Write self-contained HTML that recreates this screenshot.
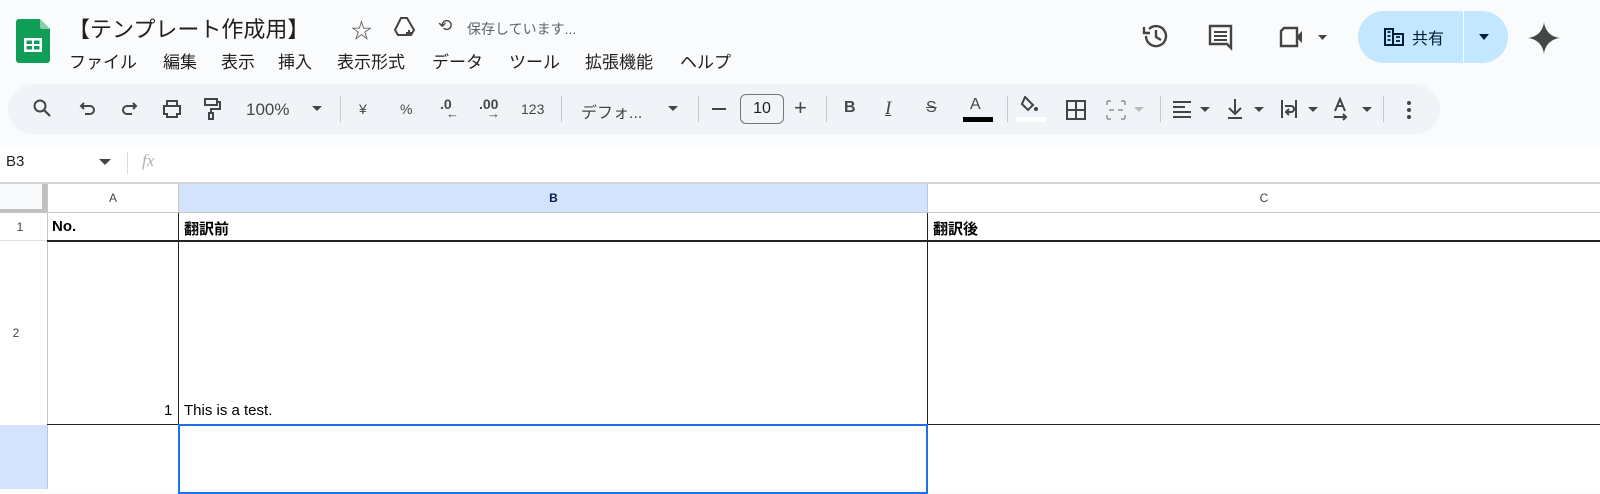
<!DOCTYPE html>
<html><head><meta charset="utf-8"><style>
*{margin:0;padding:0;box-sizing:border-box}
body{width:1600px;height:489px;overflow:hidden;background:#f9fbfd;font-family:"Liberation Sans","Noto Sans CJK JP",sans-serif;color:#1f1f1f;position:relative}
.a{position:absolute;white-space:nowrap}
.m{position:absolute;top:48px;font-size:17px;color:#1f1f1f;white-space:nowrap}
.tb{position:absolute;left:8px;top:84px;width:1432px;height:50px;background:#f0f4f9;border-radius:25px}
.ti{position:absolute;top:97px;font-size:16px;color:#444746}
.sep{position:absolute;top:96px;width:1px;height:26px;background:#c7c7c7}
.grid{position:absolute;left:0;top:182px;width:1600px;height:307px;background:#fff}
.hl{position:absolute;height:1px;background:#e1e1e1}
.vl{position:absolute;width:1px;background:#e1e1e1}
.hdr{position:absolute;font-size:12px;color:#444;text-align:center}
</style></head><body>
<svg class="a" style="left:16px;top:19px" width="34" height="44" viewBox="0 0 34 44"><path d="M3 0h21l10 10v31a3 3 0 0 1-3 3H3a3 3 0 0 1-3-3V3a3 3 0 0 1 3-3z" fill="#0f9d58"/><path d="M24 0l10 10h-8a2 2 0 0 1-2-2z" fill="#87ceac"/><rect x="8" y="19" width="18" height="14" fill="#fff"/><rect x="10.5" y="21.5" width="5.5" height="3.5" fill="#0f9d58"/><rect x="18" y="21.5" width="5.5" height="3.5" fill="#0f9d58"/><rect x="10.5" y="27" width="5.5" height="3.5" fill="#0f9d58"/><rect x="18" y="27" width="5.5" height="3.5" fill="#0f9d58"/></svg>
<div class="a" style="left:68px;top:12px;font-size:22px">【テンプレート作成用】</div>
<div class="a" style="left:351px;top:15px;font-size:21px;color:#444">☆</div>
<svg class="a" style="left:393px;top:16px" width="24" height="22" viewBox="0 0 24 22"><path d="M8 2h6l7 12-3 5H5l-3-5z" fill="none" stroke="#444" stroke-width="2"/><path d="M16 14v6M13 17h6" stroke="#444" stroke-width="2"/></svg>
<div class="a" style="left:438px;top:16px;font-size:17px;color:#444">⟲</div>
<div class="a" style="left:467px;top:19px;font-size:14px;color:#5f6368">保存しています...</div>
<div class="m" style="left:69px">ファイル</div>
<div class="m" style="left:163px">編集</div>
<div class="m" style="left:221px">表示</div>
<div class="m" style="left:278px">挿入</div>
<div class="m" style="left:337px">表示形式</div>
<div class="m" style="left:432px">データ</div>
<div class="m" style="left:509px">ツール</div>
<div class="m" style="left:585px">拡張機能</div>
<div class="m" style="left:680px">ヘルプ</div>
<svg class="a" style="left:1141px;top:22px" width="30" height="28" viewBox="0 0 30 28"><path d="M5 14a10 10 0 1 0 3-7" fill="none" stroke="#444" stroke-width="2.4"/><path d="M3 5v6h6" fill="none" stroke="#444" stroke-width="2.4"/><path d="M15 8v7l5 3" fill="none" stroke="#444" stroke-width="2.4"/></svg>
<svg class="a" style="left:1207px;top:23px" width="28" height="28" viewBox="0 0 28 28"><path d="M3 3h21v22l-4-4H3z" fill="none" stroke="#444" stroke-width="2.4"/><path d="M7 9h13M7 13h13M7 17h13" stroke="#444" stroke-width="2"/></svg>
<svg class="a" style="left:1278px;top:25px" width="52" height="24" viewBox="0 0 52 24"><path d="M6 3h13v18H3V6z" fill="none" stroke="#444" stroke-width="2.4"/><path d="M19 11l5-5v12l-5-5z" fill="#444"/><path d="M40 10h9l-4.5 5z" fill="#444"/></svg>
<div class="a" style="left:1358px;top:11px;width:150px;height:52px;background:#c2e7ff;border-radius:26px"></div>
<div class="a" style="left:1463px;top:11px;width:1px;height:52px;background:#fff"></div>
<svg class="a" style="left:1383px;top:27px" width="22" height="20" viewBox="0 0 22 20"><path d="M2 2h8v16H2zM10 7h10v11H10" fill="none" stroke="#001d35" stroke-width="2"/><path d="M4.5 5h3M4.5 9h3M4.5 13h3M13 10h4M13 14h4" stroke="#001d35" stroke-width="1.8"/></svg>
<div class="a" style="left:1412px;top:25px;font-size:16px;color:#001d35">共有</div>
<svg class="a" style="left:1478px;top:33px" width="12" height="8"><path d="M1 1h10L6 7z" fill="#001d35"/></svg>
<svg class="a" style="left:1528px;top:22px" width="32" height="32" viewBox="0 0 32 32"><path d="M16 0C17 9 23 15 32 16 23 17 17 23 16 32 15 23 9 17 0 16 9 15 15 9 16 0z" fill="#444746"/></svg>

<div class="tb"></div>
<svg class="a" style="left:32px;top:98px" width="20" height="20" viewBox="0 0 20 20"><circle cx="8" cy="8" r="5.5" fill="none" stroke="#444" stroke-width="2"/><path d="M12 12l6 6" stroke="#444" stroke-width="2.2"/></svg>
<svg class="a" style="left:79px;top:101px" width="18" height="18" viewBox="0 0 18 18"><path d="M5 2L2 5l3 3M2 5h9a4 4 0 0 1 0 8H6" fill="none" stroke="#444" stroke-width="2"/></svg>
<svg class="a" style="left:120px;top:101px" width="18" height="18" viewBox="0 0 18 18"><path d="M13 2l3 3-3 3M16 5H7a4 4 0 0 0 0 8h5" fill="none" stroke="#444" stroke-width="2"/></svg>
<svg class="a" style="left:162px;top:99px" width="20" height="20" viewBox="0 0 20 20"><path d="M5 2h10v5H5zM2 7h16v8h-3v3H5v-3H2z" fill="none" stroke="#444" stroke-width="2"/></svg>
<svg class="a" style="left:202px;top:97px" width="20" height="24" viewBox="0 0 20 24"><path d="M3 2h12v6H3zM15 5h3v7H9v4M7 16h4v6H7z" fill="none" stroke="#444" stroke-width="2"/></svg>
<div class="ti" style="left:246px;top:100px;font-size:17px">100%</div>
<svg class="a" style="left:312px;top:106px" width="10" height="6"><path d="M0 0h10L5 5z" fill="#444"/></svg>
<div class="sep" style="left:340px"></div>
<div class="ti" style="left:359px;top:101px;font-size:14px">¥</div>
<div class="ti" style="left:400px;top:101px;font-size:14px">%</div>
<div class="ti" style="left:440px;top:96px;font-size:14px;font-weight:bold">.0</div><div class="ti" style="left:446px;top:106px;font-size:13px">←</div>
<div class="ti" style="left:479px;top:96px;font-size:14px;font-weight:bold">.00</div><div class="ti" style="left:487px;top:106px;font-size:13px">→</div>
<div class="ti" style="left:521px;top:101px;font-size:14px">123</div>
<div class="sep" style="left:561px"></div>
<div class="ti" style="left:581px;top:99px;font-size:16px">デフォ...</div>
<svg class="a" style="left:668px;top:106px" width="10" height="6"><path d="M0 0h10L5 5z" fill="#444"/></svg>
<div class="sep" style="left:698px"></div>
<div class="a" style="left:712px;top:108px;width:14px;height:2px;background:#444"></div>
<div class="a" style="left:740px;top:94px;width:44px;height:30px;border:1px solid #747775;border-radius:6px;text-align:center;font-size:16px;line-height:28px;color:#1f1f1f">10</div>
<div class="ti" style="left:794px;top:95px;font-size:22px">+</div>
<div class="sep" style="left:826px"></div>
<div class="ti" style="left:844px;top:99px;font-weight:bold;font-size:16px">B</div>
<div class="ti" style="left:885px;top:98px;font-style:italic;font-family:'Liberation Serif',serif;font-size:19px;text-decoration:underline;">I</div>
<div class="ti" style="left:926px;top:99px;font-size:16px;text-decoration:line-through">S</div>
<div class="ti" style="left:970px;top:96px;font-size:16px">A</div>
<div class="a" style="left:963px;top:117px;width:30px;height:5px;background:#000"></div>
<div class="sep" style="left:1007px"></div>
<svg class="a" style="left:1019px;top:96px" width="22" height="18" viewBox="0 0 22 18"><path d="M6 1l8 8-5 5-6-6z" fill="none" stroke="#444" stroke-width="2"/><circle cx="17" cy="13" r="2" fill="#444"/></svg>
<div class="a" style="left:1016px;top:117px;width:30px;height:5px;background:#fff"></div>
<svg class="a" style="left:1066px;top:100px" width="20" height="20" viewBox="0 0 20 20"><path d="M1 1h18v18H1zM10 1v18M1 10h18" fill="none" stroke="#444" stroke-width="2"/></svg>
<svg class="a" style="left:1106px;top:100px" width="50" height="20" viewBox="0 0 50 20"><path d="M1 1h4M1 19h4M1 1v4M1 15v4M19 1h-4M19 19h-4M19 1v4M19 15v4M3 10h5M17 10h-5" fill="none" stroke="#aaa" stroke-width="2"/><path d="M28 7h10l-5 5z" fill="#bbb"/></svg>
<div class="sep" style="left:1160px"></div>
<svg class="a" style="left:1172px;top:100px" width="44" height="20" viewBox="0 0 44 20"><path d="M1 2h18M1 7h12M1 12h18M1 17h18" stroke="#444" stroke-width="2"/><path d="M28 7h10l-5 5z" fill="#444"/></svg>
<svg class="a" style="left:1226px;top:98px" width="44" height="22" viewBox="0 0 44 22"><path d="M9 1v14M3 10l6 6 6-6M2 20h14" fill="none" stroke="#444" stroke-width="2"/><path d="M28 9h10l-5 5z" fill="#444"/></svg>
<svg class="a" style="left:1280px;top:98px" width="44" height="22" viewBox="0 0 44 22"><path d="M2 2v18M16 2v18M5 8h6a3 3 0 0 1 0 6H7M9 11l-3 3 3 3" fill="none" stroke="#444" stroke-width="2"/><path d="M28 9h10l-5 5z" fill="#444"/></svg>
<svg class="a" style="left:1332px;top:97px" width="44" height="24" viewBox="0 0 44 24"><path d="M3 14L8 2l5 12M5 9h6M2 20h12M11 17l3 3-3 3" fill="none" stroke="#444" stroke-width="2"/><path d="M30 10h10l-5 5z" fill="#444"/></svg>
<div class="sep" style="left:1383px"></div>
<svg class="a" style="left:1406px;top:100px" width="6" height="20"><circle cx="3" cy="3" r="2" fill="#444"/><circle cx="3" cy="10" r="2" fill="#444"/><circle cx="3" cy="17" r="2" fill="#444"/></svg>

<div class="a" style="left:0;top:145px;width:1600px;height:37px;background:#fff"></div>
<div class="a" style="left:6px;top:153px;font-size:15px">B3</div>
<svg class="a" style="left:99px;top:159px" width="12" height="6"><path d="M0 0h12L6 6z" fill="#444"/></svg>
<div class="a" style="left:127px;top:152px;width:1px;height:22px;background:#ddd"></div>
<div class="a" style="left:142px;top:151px;font-size:17px;font-style:italic;color:#b0b0b0;font-family:'Liberation Serif',serif">fx</div>

<div class="grid"></div>
<div class="a" style="left:0;top:182px;width:1600px;height:2px;background:#d4d4d4"></div>
<div class="a" style="left:0;top:184px;width:47px;height:29px;background:#f8f9fa"></div>
<div class="a" style="left:42px;top:184px;width:5px;height:29px;background:#c0c0c0"></div>
<div class="a" style="left:0;top:209px;width:47px;height:4px;background:#c0c0c0"></div>
<div class="a" style="left:179px;top:184px;width:749px;height:29px;background:#d3e3fd"></div>
<div class="a" style="left:0;top:425px;width:47px;height:64px;background:#d3e3fd"></div>
<div class="hl" style="left:47px;top:212px;width:1553px;background:#c4c7c5"></div>
<div class="vl" style="left:47px;top:184px;height:305px;background:#c4c7c5"></div>
<div class="vl" style="left:178px;top:184px;height:29px;background:#c4c7c5"></div>
<div class="vl" style="left:927px;top:184px;height:29px;background:#c4c7c5"></div>
<div class="hdr" style="left:48px;top:191px;width:130px">A</div>
<div class="hdr" style="left:179px;top:191px;width:749px;font-weight:bold;color:#041e49">B</div>
<div class="hdr" style="left:928px;top:191px;width:672px">C</div>
<div class="hdr" style="left:0;top:220px;width:40px">1</div>
<div class="hdr" style="left:0;top:326px;width:32px">2</div>
<div class="hl" style="left:0;top:240px;width:47px"></div>
<div class="a" style="left:47px;top:240px;width:1553px;height:2px;background:#222"></div>
<div class="a" style="left:47px;top:424px;width:1553px;height:1px;background:#222"></div>
<div class="a" style="left:178px;top:213px;width:1px;height:212px;background:#222"></div>
<div class="a" style="left:927px;top:213px;width:1px;height:212px;background:#222"></div>
<div class="vl" style="left:927px;top:425px;height:64px;background:#e1e1e1"></div>
<div class="a" style="left:52px;top:218px;font-size:15px;font-weight:bold;color:#000">No.</div>
<div class="a" style="left:184px;top:218px;font-size:15px;font-weight:bold;color:#000">翻訳前</div>
<div class="a" style="left:933px;top:218px;font-size:15px;font-weight:bold;color:#000">翻訳後</div>
<div class="a" style="left:164px;top:402px;font-size:15px;color:#000">1</div>
<div class="a" style="left:184px;top:402px;font-size:15px;color:#000">This is a test.</div>
<div class="a" style="left:178px;top:424px;width:750px;height:70px;border:2px solid #1a73e8"></div>
</body></html>
